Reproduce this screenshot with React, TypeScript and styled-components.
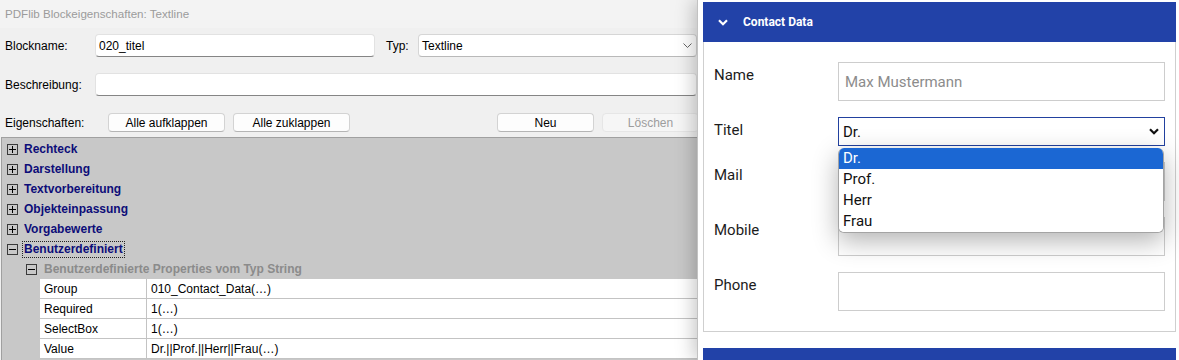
import React from "react";
import styled, { createGlobalStyle } from "styled-components";

const GlobalStyle = createGlobalStyle`
  html, body { margin: 0; padding: 0; background: #ffffff; }
  body { font-family: "Liberation Sans", Arial, sans-serif; }
  #root { width: 1179px; height: 360px; overflow: hidden; }
  * { box-sizing: border-box; }
`;

const Page = styled.div`
  display: flex;
  width: 1179px;
  height: 360px;
  overflow: hidden;
`;

/* ---------- Left: PDFlib dialog ---------- */

const Dialog = styled.div`
  flex: 0 0 697px;
  display: flex;
  flex-direction: column;
  background: #f0f0f0;
  overflow: hidden;
  font-family: "Liberation Sans", Arial, sans-serif;
  font-size: 12px;
  color: #000;
`;

const TitleBar = styled.div`
  flex: 0 0 28px;
  display: flex;
  align-items: center;
  padding: 0 0 1px 5px;
  background: #f3f3f3;
  color: #9b9b9b;
  font-size: 11.6px;
`;

const FormRow = styled.div<{ $top: number; $h: number }>`
  flex: 0 0 auto;
  display: flex;
  align-items: center;
  height: ${(p) => p.$h}px;
  margin-top: ${(p) => p.$top}px;
`;

const FieldLabel = styled.span<{ $w: number }>`
  flex: 0 0 ${(p) => p.$w}px;
  padding-left: 5px;
  white-space: nowrap;
`;

const TypLabel = styled.span`
  flex: 0 0 32px;
  margin-left: 11px;
`;

const TextField = styled.input<{ $w?: number }>`
  ${(p) => (p.$w ? `flex: 0 0 ${p.$w}px;` : "flex: 1 1 auto; min-width: 0;")}
  height: 23px;
  padding: 0 3px;
  border: 1px solid #e2e2e2;
  border-bottom: 1px solid #858585;
  border-radius: 4px;
  background: #ffffff;
  font: inherit;
  color: #000;
  outline: none;
`;

const ComboBox = styled.div`
  flex: 1 1 auto;
  height: 23px;
  display: flex;
  align-items: center;
  justify-content: space-between;
  padding: 0 4px 0 3px;
  border: 1px solid #d6d6d6;
  border-bottom-color: #b9b9b9;
  border-radius: 4px;
  background: #ffffff;
`;

const PushButton = styled.button<{ $w: number; $ml?: number }>`
  flex: 0 0 ${(p) => p.$w}px;
  height: 19px;
  margin-left: ${(p) => p.$ml ?? 8}px;
  padding: 0;
  border: 1px solid #d3d3d3;
  border-bottom-color: #b5b5b5;
  border-radius: 4px;
  background: #fdfdfd;
  font: inherit;
  color: #000;
  line-height: 16px;

  &:disabled {
    background: #f6f6f6;
    border-color: #e6e6e6;
    color: #9d9d9d;
  }
`;

const Grid = styled.div`
  flex: 1 1 auto;
  margin: 5px 0 0 1px;
  padding-top: 1px;
  border-top: 1px solid #a0a0a0;
  border-left: 1px solid #a0a0a0;
  background: #c8c8c8;
  display: flex;
  flex-direction: column;
`;

const CategoryRow = styled.div<{ $indent: number }>`
  flex: 0 0 20px;
  display: flex;
  align-items: center;
  padding-left: ${(p) => p.$indent}px;
`;

const CategoryText = styled.span<{ $muted?: boolean; $focused?: boolean }>`
  margin-left: ${(p) => (p.$muted ? 7 : p.$focused ? 4 : 6)}px;
  padding: 0 ${(p) => (p.$focused ? 1 : 0)}px;
  font-weight: 700;
  color: ${(p) => (p.$muted ? "#8b8b8b" : "#0d0d78")};
  line-height: 15px;
  border: ${(p) => (p.$focused ? "1px dotted #222" : "none")};
  white-space: nowrap;
`;

const PropRow = styled.div`
  flex: 0 0 20px;
  display: flex;
  margin-left: 38px;
  background: #ffffff;
  border-bottom: 1px solid #c3c3c3;
`;

const PropName = styled.div`
  flex: 0 0 107px;
  display: flex;
  align-items: center;
  padding-left: 4px;
  border-right: 1px solid #c3c3c3;
`;

const PropValue = styled.div`
  flex: 1 1 auto;
  display: flex;
  align-items: center;
  padding-left: 4px;
  white-space: nowrap;
`;

/* ---------- Right: web form panel ---------- */

const Panel = styled.div`
  flex: 1 1 auto;
  position: relative;
  z-index: 1;
  display: flex;
  flex-direction: column;
  padding: 2px 3px 0 5px;
  background: #ffffff;
  border-left: 1px solid #c2c2c2;
  box-shadow: -3px 0 18px rgba(0, 0, 0, 0.24);
  font-family: Roboto, "Noto Sans", sans-serif;
`;

const SectionHeader = styled.div`
  flex: 0 0 40px;
  display: flex;
  align-items: center;
  padding-left: 15px;
  background: #2242a8;
  color: #ffffff;
  font-weight: 700;
  font-size: 12px;
`;

const HeaderChevron = styled.svg`
  margin-right: 15px;
`;

const SectionBody = styled.div`
  flex: 0 0 auto;
  display: flex;
  flex-direction: column;
  gap: 16px;
  padding: 20px 10px;
  border: 1px solid #cfcfcf;
  border-top: none;
  margin-bottom: 16px;
`;

const FieldRow = styled.div`
  display: grid;
  grid-template-columns: 124px 1fr;
  align-items: start;
`;

const FieldName = styled.label`
  padding-top: 3px;
  font-size: 15px;
  line-height: 20px;
  color: #1c1c1c;
`;

const FormInput = styled.input`
  width: 100%;
  height: 39px;
  padding: 0 6px;
  border: 1px solid #cdcdcd;
  background: #ffffff;
  font-family: Roboto, "Noto Sans", sans-serif;
  font-size: 15px;
  color: #1c1c1c;
  outline: none;

  &::placeholder {
    color: #8c8c8c;
  }
`;

const SelectWrap = styled.div`
  position: relative;
`;

const SelectControl = styled.div`
  height: 29px;
  display: flex;
  align-items: center;
  justify-content: space-between;
  padding: 0 5px 0 4px;
  border: 1px solid #22419f;
  background: #ffffff;
  font-size: 15px;
  color: #111;
`;

const DropdownList = styled.ul`
  position: absolute;
  top: calc(100% + 2px);
  left: 0;
  right: 1px;
  z-index: 3;
  margin: 0;
  padding: 0;
  list-style: none;
  background: #ffffff;
  border: 1px solid #a4a4a4;
  border-top: none;
  border-radius: 6px;
  overflow: hidden;
  box-shadow: 0 8px 26px rgba(0, 0, 0, 0.3);
`;

const DropdownOption = styled.li<{ $active?: boolean }>`
  height: 21px;
  padding-left: 4px;
  font-size: 15px;
  line-height: 21px;
  background: ${(p) => (p.$active ? "#1b67d3" : "#ffffff")};
  color: ${(p) => (p.$active ? "#ffffff" : "#111111")};
`;

/* ---------- Icons ---------- */

const ExpandBox = ({ open }: { open?: boolean }) => (
  <svg width="11" height="11" viewBox="0 0 11 11" shapeRendering="crispEdges">
    <rect x="0.5" y="0.5" width="10" height="10" fill="none" stroke="#3a3a3a" />
    <line x1="2" y1="5.5" x2="9" y2="5.5" stroke="#000" />
    {!open && <line x1="5.5" y1="2" x2="5.5" y2="9" stroke="#000" />}
  </svg>
);

const ThinChevron = () => (
  <svg width="9" height="5" viewBox="0 0 9 5">
    <polyline points="0.5,0.5 4.5,4.5 8.5,0.5" fill="none" stroke="#666" strokeWidth="1" />
  </svg>
);

const BoldChevron = () => (
  <svg width="10" height="7" viewBox="0 0 10 7">
    <polyline points="1,1.2 5,5.2 9,1.2" fill="none" stroke="#111" strokeWidth="2.2" />
  </svg>
);

/* ---------- Data ---------- */

const categories = ["Rechteck", "Darstellung", "Textvorbereitung", "Objekteinpassung", "Vorgabewerte"];

const properties: [string, string][] = [
  ["Group", "010_Contact_Data(…)"],
  ["Required", "1(…)"],
  ["SelectBox", "1(…)"],
  ["Value", "Dr.||Prof.||Herr||Frau(…)"],
];

const titles = ["Dr.", "Prof.", "Herr", "Frau"];

export default function App() {
  return (
    <>
      <GlobalStyle />
      <Page>
        <Dialog>
          <TitleBar>PDFlib Blockeigenschaften: Textline</TitleBar>

          <FormRow $top={6} $h={23}>
            <FieldLabel $w={95}>Blockname:</FieldLabel>
            <TextField $w={280} readOnly defaultValue="020_titel" />
            <TypLabel>Typ:</TypLabel>
            <ComboBox>
              <span>Textline</span>
              <ThinChevron />
            </ComboBox>
          </FormRow>

          <FormRow $top={16} $h={23}>
            <FieldLabel $w={95}>Beschreibung:</FieldLabel>
            <TextField readOnly defaultValue="" />
          </FormRow>

          <FormRow $top={17} $h={19}>
            <FieldLabel $w={108}>Eigenschaften:</FieldLabel>
            <PushButton $w={117} $ml={0}>Alle aufklappen</PushButton>
            <PushButton $w={117}>Alle zuklappen</PushButton>
            <PushButton $w={97} $ml={147}>Neu</PushButton>
            <PushButton $w={97} disabled>Löschen</PushButton>
          </FormRow>

          <Grid>
            {categories.map((c) => (
              <CategoryRow key={c} $indent={5}>
                <ExpandBox />
                <CategoryText>{c}</CategoryText>
              </CategoryRow>
            ))}
            <CategoryRow $indent={5}>
              <ExpandBox open />
              <CategoryText $focused>Benutzerdefiniert</CategoryText>
            </CategoryRow>
            <CategoryRow $indent={24}>
              <ExpandBox open />
              <CategoryText $muted>Benutzerdefinierte Properties vom Typ String</CategoryText>
            </CategoryRow>
            {properties.map(([k, v]) => (
              <PropRow key={k}>
                <PropName>{k}</PropName>
                <PropValue>{v}</PropValue>
              </PropRow>
            ))}
          </Grid>
        </Dialog>

        <Panel>
          <SectionHeader>
            <HeaderChevron width="10" height="7" viewBox="0 0 10 7">
              <polyline points="1,1.2 5,5.2 9,1.2" fill="none" stroke="#fff" strokeWidth="2.2" />
            </HeaderChevron>
            Contact Data
          </SectionHeader>

          <SectionBody>
            <FieldRow>
              <FieldName>Name</FieldName>
              <FormInput readOnly placeholder="Max Mustermann" />
            </FieldRow>
            <FieldRow>
              <FieldName>Titel</FieldName>
              <SelectWrap>
                <SelectControl>
                  <span>Dr.</span>
                  <BoldChevron />
                </SelectControl>
                <DropdownList>
                  {titles.map((t, i) => (
                    <DropdownOption key={t} $active={i === 0}>
                      {t}
                    </DropdownOption>
                  ))}
                </DropdownList>
              </SelectWrap>
            </FieldRow>
            <FieldRow>
              <FieldName>Mail</FieldName>
              <FormInput readOnly />
            </FieldRow>
            <FieldRow>
              <FieldName>Mobile</FieldName>
              <FormInput readOnly />
            </FieldRow>
            <FieldRow>
              <FieldName>Phone</FieldName>
              <FormInput readOnly />
            </FieldRow>
          </SectionBody>

          <SectionHeader />
        </Panel>
      </Page>
    </>
  );
}
